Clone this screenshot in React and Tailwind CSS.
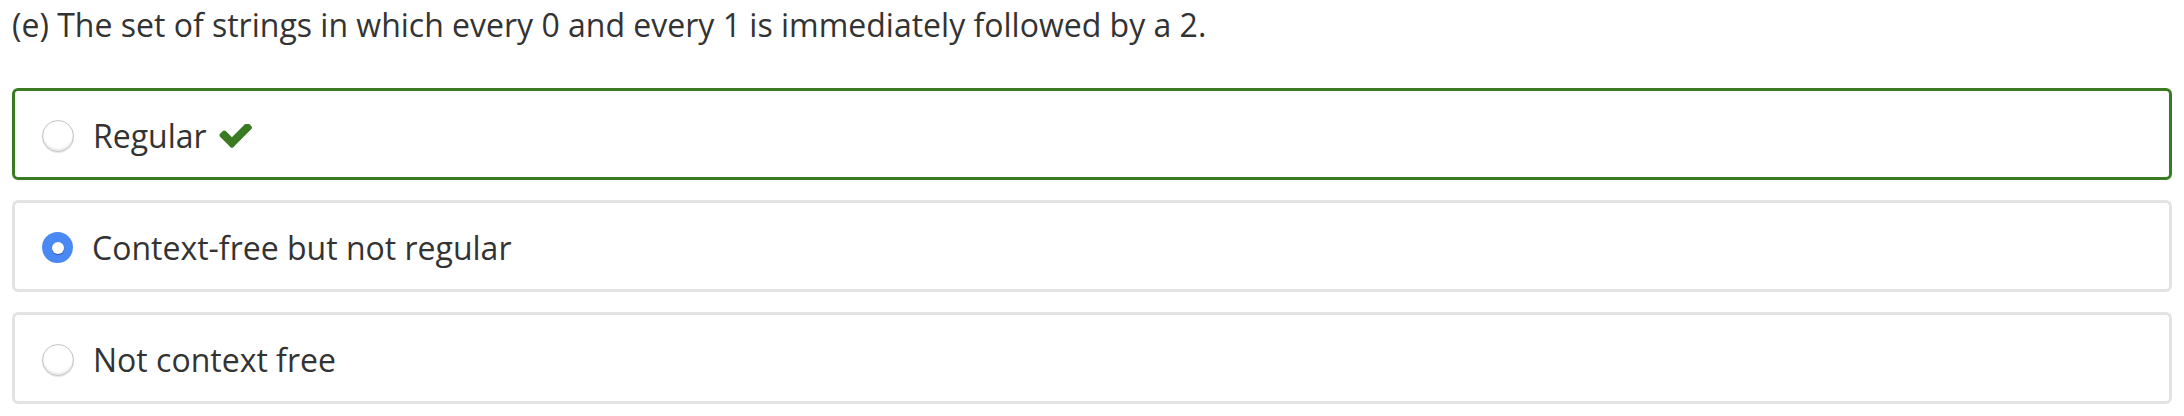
import React from 'react';

const options = [
  { label: 'Regular', selected: false, correct: true },
  { label: 'Context-free but not regular', selected: true, correct: false },
  { label: 'Not context free', selected: false, correct: false },
];

// heavy check mark, same shape as the old font-awesome glyph
const Check = () => (
  <svg viewBox="99 400 1572 1124" className="ml-[12px] w-[33px] h-[24px] text-[#3a7a23]" fill="currentColor">
    <path d="M1671 566q0 40-28 68l-724 724-136 136q-28 28-68 28t-68-28l-136-136-362-362q-28-28-28-68t28-68l136-136q28-28 68-28t68 28l294 295 656-657q28-28 68-28t68 28l136 136q28 28 28 68z" />
  </svg>
);

const Radio = ({ checked }) =>
  checked ? (
    <span className="flex items-center justify-center w-[31px] h-[31px] rounded-full bg-[#4a89f3] shrink-0">
      <span className="w-[12px] h-[12px] rounded-full bg-white shadow-[0_1px_1px_rgba(0,0,0,0.35)]" />
    </span>
  ) : (
    <span className="w-[32px] h-[32px] rounded-full border border-[#c4c4c4] bg-white shadow-[inset_0_-2px_2px_rgba(0,0,0,0.08),0_1px_1px_rgba(0,0,0,0.1)] shrink-0" />
  );

export default function App() {
  return (
    <div className="min-h-[416px] bg-white px-[12px] pt-[5px] text-[#333] font-['Open_Sans',sans-serif]">
      <p className="text-[32px] leading-[40px] mb-[43px]">
        (e) The set of strings in which every 0 and every 1 is immediately followed by a 2.
      </p>

      <div className="flex flex-col gap-[20px]">
        {options.map((opt) => (
          <label
            key={opt.label}
            className={`flex items-center h-[92px] rounded-[6px] border-[3px] pl-[27px] pt-[3px] ${
              opt.correct ? 'border-[#3a7a23]' : 'border-[#e3e3e3]'
            }`}
          >
            <Radio checked={opt.selected} />
            <span className="ml-[19px] text-[32px] leading-[40px]">{opt.label}</span>
            {opt.correct && <Check />}
          </label>
        ))}
      </div>
    </div>
  );
}
